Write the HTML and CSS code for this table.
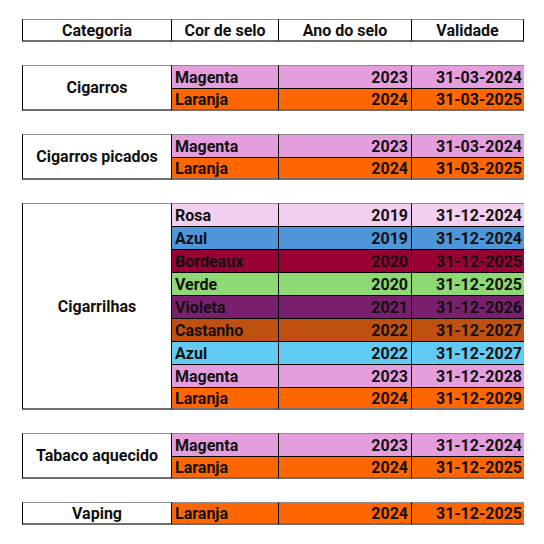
FILE: index.html
```html
<!DOCTYPE html>
<html lang="pt">
<head>
    <meta charset="UTF-8">
    <meta name="viewport" content="width=device-width, initial-scale=1.0">
    <title>Selos - validade</title>
    <link rel="stylesheet" href="styles.css">
</head>
<body>
    <div class="sheet">
        <div class="group head">
            <div class="cell cat">Categoria</div>
            <div class="cell mid">Cor de selo</div>
            <div class="cell mid">Ano do selo</div>
            <div class="cell mid last">Validade</div>
        </div>

        <div class="group rows-2">
            <div class="cell cat">Cigarros</div>
            <div class="cell cor magenta first">Magenta</div>
            <div class="cell num magenta first">2023</div>
            <div class="cell num magenta first end">31-03-2024</div>
            <div class="cell cor laranja bottom">Laranja</div>
            <div class="cell num laranja bottom">2024</div>
            <div class="cell num laranja bottom end">31-03-2025</div>
        </div>

        <div class="group rows-2">
            <div class="cell cat">Cigarros picados</div>
            <div class="cell cor magenta first">Magenta</div>
            <div class="cell num magenta first">2023</div>
            <div class="cell num magenta first end">31-03-2024</div>
            <div class="cell cor laranja bottom">Laranja</div>
            <div class="cell num laranja bottom">2024</div>
            <div class="cell num laranja bottom end">31-03-2025</div>
        </div>

        <div class="group rows-9">
            <div class="cell cat">Cigarrilhas</div>
            <div class="cell cor rosa first">Rosa</div>
            <div class="cell num rosa first">2019</div>
            <div class="cell num rosa first end">31-12-2024</div>
            <div class="cell cor azul">Azul</div>
            <div class="cell num azul">2019</div>
            <div class="cell num azul end">31-12-2024</div>
            <div class="cell cor bordeaux">Bordeaux</div>
            <div class="cell num bordeaux">2020</div>
            <div class="cell num bordeaux end">31-12-2025</div>
            <div class="cell cor verde">Verde</div>
            <div class="cell num verde">2020</div>
            <div class="cell num verde end">31-12-2025</div>
            <div class="cell cor violeta">Violeta</div>
            <div class="cell num violeta">2021</div>
            <div class="cell num violeta end">31-12-2026</div>
            <div class="cell cor castanho">Castanho</div>
            <div class="cell num castanho">2022</div>
            <div class="cell num castanho end">31-12-2027</div>
            <div class="cell cor ciano">Azul</div>
            <div class="cell num ciano">2022</div>
            <div class="cell num ciano end">31-12-2027</div>
            <div class="cell cor magenta">Magenta</div>
            <div class="cell num magenta">2023</div>
            <div class="cell num magenta end">31-12-2028</div>
            <div class="cell cor laranja bottom">Laranja</div>
            <div class="cell num laranja bottom">2024</div>
            <div class="cell num laranja bottom end">31-12-2029</div>
        </div>

        <div class="group rows-2">
            <div class="cell cat">Tabaco aquecido</div>
            <div class="cell cor magenta first">Magenta</div>
            <div class="cell num magenta first">2023</div>
            <div class="cell num magenta first end">31-12-2024</div>
            <div class="cell cor laranja bottom">Laranja</div>
            <div class="cell num laranja bottom">2024</div>
            <div class="cell num laranja bottom end">31-12-2025</div>
        </div>

        <div class="group">
            <div class="cell cat">Vaping</div>
            <div class="cell cor laranja first bottom">Laranja</div>
            <div class="cell num laranja first bottom">2024</div>
            <div class="cell num laranja first bottom end">31-12-2025</div>
        </div>
    </div>
</body>
</html>
```

FILE: styles.css
```css
* {
    box-sizing: border-box;
}

body {
    margin: 0;
    background: #fff;
    font-family: Roboto, "Liberation Sans", sans-serif;
    font-weight: bold;
    font-size: 16px;
    color: #111;
}

.sheet {
    display: flex;
    flex-direction: column;
    gap: 23px;
    padding: 19px 0 0 22px;
}

.group {
    display: grid;
    grid-template-columns: 150px 107px 133px 112px;
    grid-auto-rows: 23px;
    width: 502px;
}

.rows-2 .cat { grid-row: span 2; }
.rows-9 .cat { grid-row: span 9; }

.cell {
    display: flex;
    align-items: center;
    white-space: nowrap;
    border-top: 1px solid #000;
    border-right: 1px solid #000;
}

/* first column, merged over the rows of its group */
.cat {
    justify-content: center;
    background: #fff;
    border-left: 1px solid #000;
    border-top-color: #8c8c8c;
    border-bottom: 2px solid #6e6e6e;
}

.head .cell {
    border-top-color: #8c8c8c;
    border-bottom: 2px solid #6e6e6e;
}

.mid {
    justify-content: center;
}

.cor {
    padding-left: 3px;
}

.num {
    justify-content: flex-end;
    padding-right: 3px;
}

.end {
    border-right: none;
    padding-right: 2px;
}

.first {
    border-top-color: #8c8c8c;
}

.bottom {
    border-bottom: 2px solid #6e6e6e;
}

/* seal colours */
.magenta { background: #e59edd; }
.laranja { background: #ff6600; }
.rosa { background: #f2ceef; }
.azul { background: #4e95d9; }
.bordeaux { background: #990033; }
.verde { background: #8ed973; }
.violeta { background: #78206e; }
.castanho { background: #c0500f; }
.ciano { background: #61cbf3; }
```
